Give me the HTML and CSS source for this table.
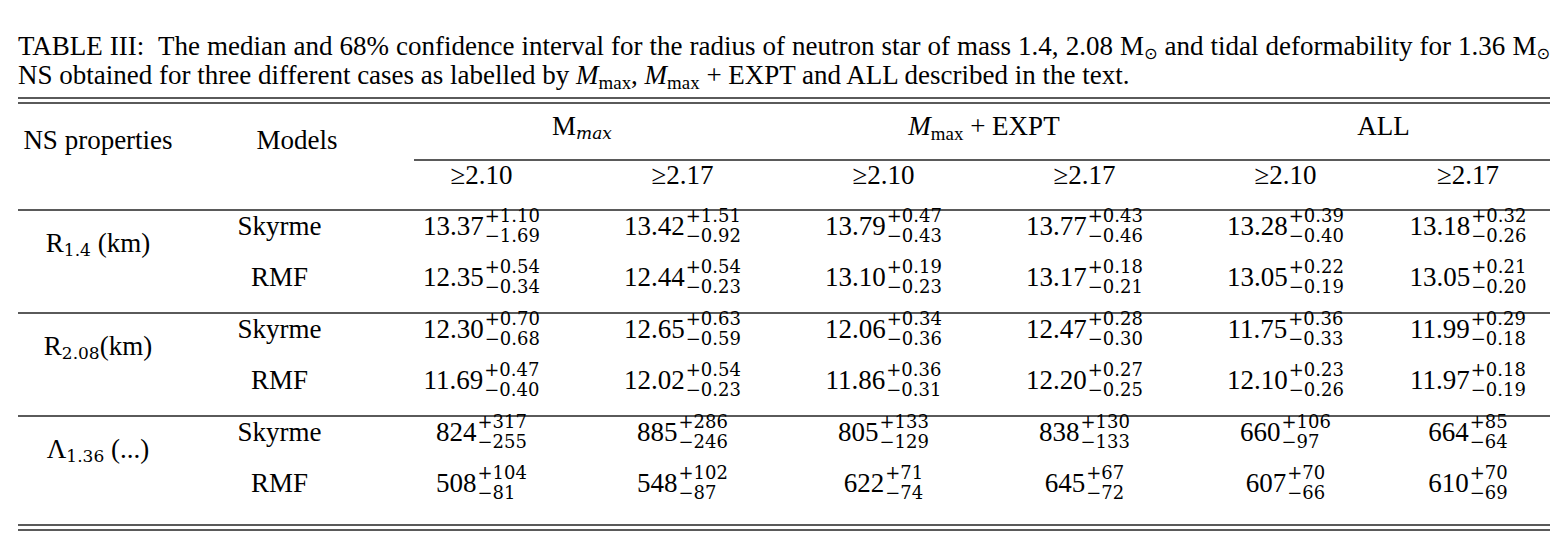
FILE: index.html
```html
<!DOCTYPE html>
<html lang="en">
<head>
<meta charset="utf-8">
<title>Table III</title>
<link rel="stylesheet" href="styles.css">
</head>
<body>
<div class="page">
  <p class="caption"><span class="cap-line1">TABLE III:&nbsp; The median and 68% confidence interval for the radius of neutron star of mass 1.4, 2.08 M<sub class="sun">⊙</sub> and tidal deformability for 1.36 M<sub class="sun">⊙</sub></span>NS obtained for three different cases as labelled by <i>M</i><sub>max</sub>, <i>M</i><sub>max</sub> + EXPT and ALL described in the text.</p>

  <div class="tbl">
    <div class="rule-double"></div>

    <div class="hd">NS properties</div>
    <div class="hd hd-model">Models</div>
    <div class="grp">M<sub class="it">max</sub></div>
    <div class="grp"><i>M</i><sub>max</sub> + EXPT</div>
    <div class="grp grp-last">ALL</div>

    <div class="rule-part"></div>

    <div class="ge">≥2.10</div>
    <div class="ge">≥2.17</div>
    <div class="ge">≥2.10</div>
    <div class="ge">≥2.17</div>
    <div class="ge">≥2.10</div>
    <div class="ge last">≥2.17</div>

    <div class="rule"></div>

    <div class="lbl">R<sub>1.4</sub> (km)</div>
    <div class="mdl a">Skyrme</div>
    <div class="val a">13.37<span class="pm"><span>+1.10</span><span>−1.69</span></span></div>
    <div class="val a">13.42<span class="pm"><span>+1.51</span><span>−0.92</span></span></div>
    <div class="val a">13.79<span class="pm"><span>+0.47</span><span>−0.43</span></span></div>
    <div class="val a">13.77<span class="pm"><span>+0.43</span><span>−0.46</span></span></div>
    <div class="val a">13.28<span class="pm"><span>+0.39</span><span>−0.40</span></span></div>
    <div class="val a last">13.18<span class="pm"><span>+0.32</span><span>−0.26</span></span></div>
    <div class="mdl b">RMF</div>
    <div class="val b">12.35<span class="pm"><span>+0.54</span><span>−0.34</span></span></div>
    <div class="val b">12.44<span class="pm"><span>+0.54</span><span>−0.23</span></span></div>
    <div class="val b">13.10<span class="pm"><span>+0.19</span><span>−0.23</span></span></div>
    <div class="val b">13.17<span class="pm"><span>+0.18</span><span>−0.21</span></span></div>
    <div class="val b">13.05<span class="pm"><span>+0.22</span><span>−0.19</span></span></div>
    <div class="val b last">13.05<span class="pm"><span>+0.21</span><span>−0.20</span></span></div>

    <div class="rule"></div>

    <div class="lbl">R<sub>2.08</sub>(km)</div>
    <div class="mdl a">Skyrme</div>
    <div class="val a">12.30<span class="pm"><span>+0.70</span><span>−0.68</span></span></div>
    <div class="val a">12.65<span class="pm"><span>+0.63</span><span>−0.59</span></span></div>
    <div class="val a">12.06<span class="pm"><span>+0.34</span><span>−0.36</span></span></div>
    <div class="val a">12.47<span class="pm"><span>+0.28</span><span>−0.30</span></span></div>
    <div class="val a">11.75<span class="pm"><span>+0.36</span><span>−0.33</span></span></div>
    <div class="val a last">11.99<span class="pm"><span>+0.29</span><span>−0.18</span></span></div>
    <div class="mdl b">RMF</div>
    <div class="val b">11.69<span class="pm"><span>+0.47</span><span>−0.40</span></span></div>
    <div class="val b">12.02<span class="pm"><span>+0.54</span><span>−0.23</span></span></div>
    <div class="val b">11.86<span class="pm"><span>+0.36</span><span>−0.31</span></span></div>
    <div class="val b">12.20<span class="pm"><span>+0.27</span><span>−0.25</span></span></div>
    <div class="val b">12.10<span class="pm"><span>+0.23</span><span>−0.26</span></span></div>
    <div class="val b last">11.97<span class="pm"><span>+0.18</span><span>−0.19</span></span></div>

    <div class="rule"></div>

    <div class="lbl">Λ<sub>1.36</sub> (...)</div>
    <div class="mdl a">Skyrme</div>
    <div class="val a">824<span class="pm"><span>+317</span><span>−255</span></span></div>
    <div class="val a">885<span class="pm"><span>+286</span><span>−246</span></span></div>
    <div class="val a">805<span class="pm"><span>+133</span><span>−129</span></span></div>
    <div class="val a">838<span class="pm"><span>+130</span><span>−133</span></span></div>
    <div class="val a">660<span class="pm"><span>+106</span><span>−97</span></span></div>
    <div class="val a last">664<span class="pm"><span>+85</span><span>−64</span></span></div>
    <div class="mdl b end">RMF</div>
    <div class="val b end">508<span class="pm"><span>+104</span><span>−81</span></span></div>
    <div class="val b end">548<span class="pm"><span>+102</span><span>−87</span></span></div>
    <div class="val b end">622<span class="pm"><span>+71</span><span>−74</span></span></div>
    <div class="val b end">645<span class="pm"><span>+67</span><span>−72</span></span></div>
    <div class="val b end">607<span class="pm"><span>+70</span><span>−66</span></span></div>
    <div class="val b end last">610<span class="pm"><span>+70</span><span>−69</span></span></div>

    <div class="rule-double"></div>
  </div>
</div>
</body>
</html>
```

FILE: styles.css
```css
body {
  margin: 0;
  background: #ffffff;
  color: #000000;
  font-family: "Liberation Serif", "Times New Roman", serif;
}

.page {
  width: 1532px;
  padding: 32px 16px 0 18px;
}

.caption {
  margin: 0;
  font-size: 27px;
  line-height: 29px;
}

.cap-line1 {
  display: block;
  text-align: justify;
  text-align-last: justify;
}

sub {
  font-size: 0.7em;
  line-height: 0;
  vertical-align: -0.25em;
}

sub.sun {
  font-family: "DejaVu Sans", sans-serif;
  font-size: 0.6em;
}

sub.it {
  font-family: "DejaVu Serif", "Liberation Serif", serif;
  font-style: italic;
  font-size: 17px;
}

.tbl {
  display: grid;
  grid-template-columns: 160px 203px 201px 201px 201px 201px 201px 164px;
  margin-top: 7px;
  font-size: 27px;
  line-height: 28px;
}

.rule {
  grid-column: 1 / -1;
  border-top: 2px solid #5a5a5a;
}

.rule-double {
  grid-column: 1 / -1;
  height: 3px;
  border-top: 2px solid #5a5a5a;
  border-bottom: 2px solid #5a5a5a;
}

.rule-part {
  grid-column: 3 / 9;
  margin-left: 33px;
  border-top: 2px solid #5a5a5a;
}

.hd {
  grid-row: span 3;
  padding-top: 22px;
  text-align: center;
}

.hd-model,
.mdl {
  padding-left: 35px;
}

.grp {
  grid-column: span 2;
  text-align: center;
  padding: 8px 0 19px;
}

.grp-last,
.last {
  padding-left: 32px;
}

.ge {
  text-align: center;
  padding: 0 0 20px;
}

.lbl {
  grid-row: span 2;
  text-align: center;
  padding-top: 18px;
}

.lbl sub {
  font-family: "DejaVu Serif", "Liberation Serif", serif;
  font-size: 17px;
}

.mdl,
.val {
  text-align: center;
}

.a {
  padding: 1px 0 22px;
}

.b {
  padding: 1px 0 21px;
}

.b.end {
  padding-bottom: 27px;
}

.pm {
  display: inline-flex;
  flex-direction: column;
  align-items: flex-start;
  font-family: "DejaVu Serif", "Liberation Serif", serif;
  font-size: 18px;
  line-height: 20px;
  vertical-align: 13px;
  margin: -8px 0 -8px 1px;
}
```
